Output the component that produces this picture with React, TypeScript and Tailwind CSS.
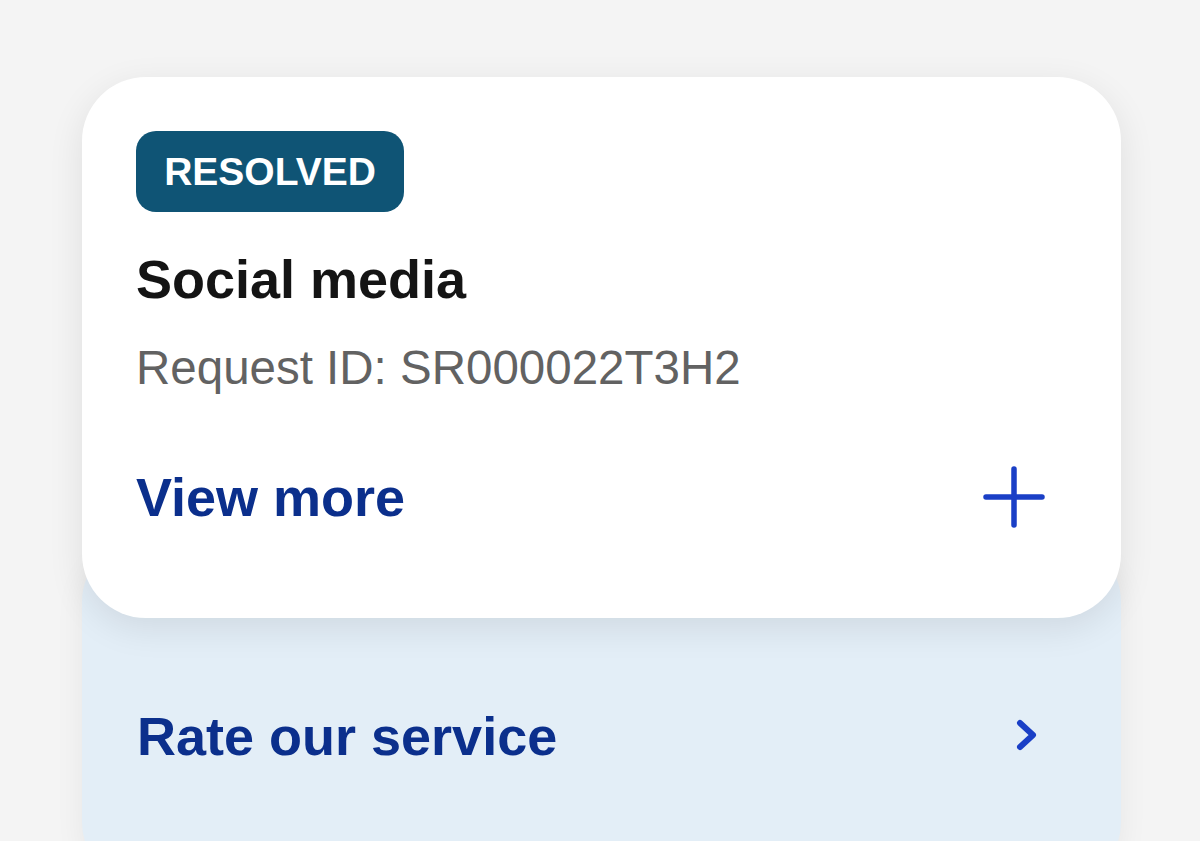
import React from "react";

export default function App() {
  return (
    <div
      className="w-[1200px] h-[841px] overflow-hidden bg-[#f4f4f4] pt-[77px] pl-[82px]"
      style={{ fontFamily: '"Liberation Sans", Arial, sans-serif' }}
    >
      <div className="w-[1039px] flex flex-col">
        <div className="relative z-10 bg-white rounded-[64px] h-[541px] pt-[54px] pl-[54px] pr-[76px] shadow-[0_10px_36px_rgba(0,0,0,0.09)] flex flex-col items-start">
          <div className="h-[81px] w-[268px] rounded-[20px] bg-[#0f5475] flex items-center justify-center">
            <span className="text-white font-bold text-[39px] leading-none">RESOLVED</span>
          </div>
          <div className="mt-[40px] text-[54px] leading-none font-bold text-[#141414]">Social media</div>
          <div className="mt-[38px] text-[47.5px] leading-none text-[#626262]">Request ID: SR000022T3H2</div>
          <div className="mt-[75px] w-full h-[60px] flex items-center justify-between">
            <span className="text-[54px] leading-none font-bold text-[#0b2f8c]">View more</span>
            <svg width="62" height="62" viewBox="0 0 62 62" fill="none">
              <path d="M31 3V59M3 31H59" stroke="#1a3fc6" strokeWidth="5.5" strokeLinecap="round" />
            </svg>
          </div>
        </div>
        <div className="mt-[-80px] bg-[#e3eef7] rounded-[64px] pt-[168px] pb-[120px] pl-[55px] pr-[82px] shadow-[0_6px_30px_rgba(0,0,0,0.06)]">
          <div className="h-[60px] flex items-center justify-between">
            <span className="text-[54px] leading-none font-bold text-[#0b2f8c]">Rate our service</span>
            <svg width="24" height="36" viewBox="0 0 24 36" fill="none">
              <path d="M5 5L18 17L5 29" stroke="#1a3fc6" strokeWidth="6" strokeLinecap="round" strokeLinejoin="round" />
            </svg>
          </div>
        </div>
      </div>
    </div>
  );
}
